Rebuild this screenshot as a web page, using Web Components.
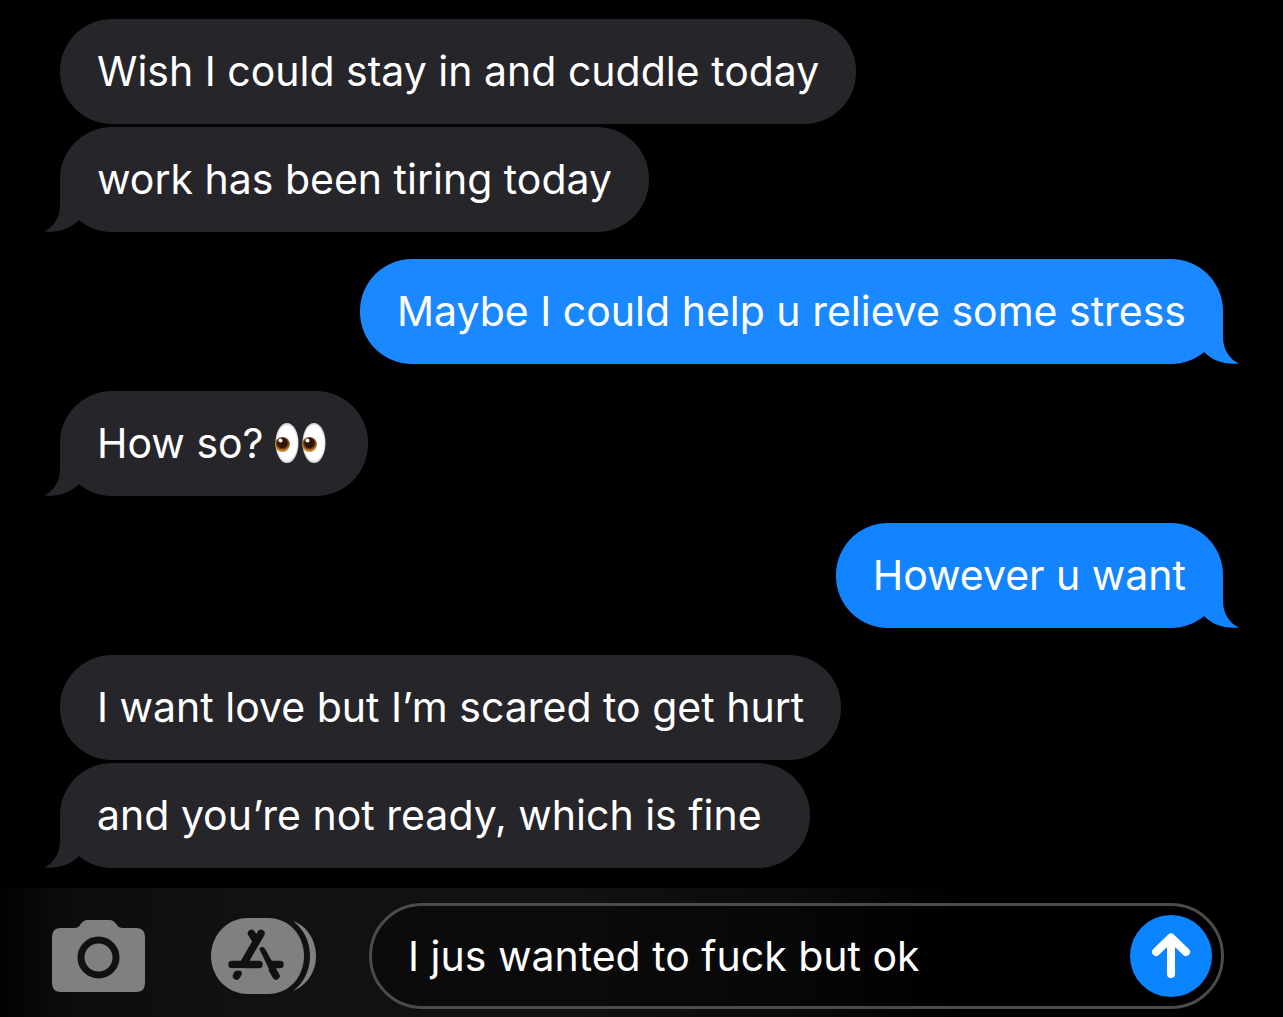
<!DOCTYPE html>
<html lang="en">
<head>
<meta charset="utf-8">
<meta name="viewport" content="width=device-width, initial-scale=1">
<title>Messages</title>
<style>
  body {
    margin: 0;
    background: #000;
    color: #fff;
    font-family: Inter, "Liberation Sans", sans-serif;
    font-size: 41px;
    line-height: 51px;
  }
</style>
</head>
<body>
<chat-screen>
  <chat-group>
    <chat-bubble>Wish I could stay in and cuddle today</chat-bubble>
    <chat-bubble tail>work has been tiring today</chat-bubble>
  </chat-group>
  <chat-group sent>
    <chat-bubble sent tail>Maybe I could help u relieve some stress</chat-bubble>
  </chat-group>
  <chat-group>
    <chat-bubble tail>How so? <eyes-emoji></eyes-emoji></chat-bubble>
  </chat-group>
  <chat-group sent>
    <chat-bubble sent tail style="--sent: #1284ff">However u want</chat-bubble>
  </chat-group>
  <chat-group>
    <chat-bubble>I want love but I’m scared to get hurt</chat-bubble>
    <chat-bubble tail>and you’re not ready, which is fine&nbsp;</chat-bubble>
  </chat-group>
  <chat-composer slot="footer" value="I jus wanted to fuck but ok"></chat-composer>
</chat-screen>

<script>
function makeTemplate(html) {
  const template = document.createElement("template");
  template.innerHTML = html;
  return template;
}

class BaseElement extends HTMLElement {
  constructor() {
    super();
    const shadow = this.attachShadow({ mode: "open" });
    shadow.append(this.constructor.template.content.cloneNode(true));
  }
}

class ChatScreen extends BaseElement {
  static template = makeTemplate(`
    <style>
      :host {
        display: flex;
        flex-direction: column;
        min-height: 100vh;
      }
      main {
        flex: 1;
        display: flex;
        flex-direction: column;
        gap: 27px;
        padding: 19px 60px 20px;
      }
    </style>
    <main><slot></slot></main>
    <slot name="footer"></slot>
  `);
}

class ChatGroup extends BaseElement {
  static template = makeTemplate(`
    <style>
      :host {
        display: flex;
        flex-direction: column;
        align-items: flex-start;
        gap: 3px;
      }
      :host([sent]) {
        align-items: flex-end;
      }
    </style>
    <slot></slot>
  `);
}

class ChatBubble extends BaseElement {
  static template = makeTemplate(`
    <style>
      :host {
        --fill: #26252a;
        display: block;
        position: relative;
        box-sizing: border-box;
        padding: 27px 37px;
        border-radius: 52px;
        background: var(--fill);
      }
      :host([sent]) {
        --fill: var(--sent, #1a88ff);
      }
      svg {
        display: none;
        position: absolute;
        bottom: 0;
        left: -16px;
        fill: var(--fill);
      }
      :host([tail]) svg {
        display: block;
      }
      :host([sent]) svg {
        left: auto;
        right: -16px;
        transform: scaleX(-1);
      }
      p {
        position: relative;
        margin: 0;
      }
    </style>
    <svg width="56" height="52" viewBox="0 0 56 52" aria-hidden="true">
      <path d="M16 0V25C16 37 10 47 0 51.500C14 53 26 49 35 40L56 20V0Z"/>
    </svg>
    <p><slot></slot></p>
  `);
}

class EyesEmoji extends BaseElement {
  static template = makeTemplate(`
    <style>
      :host {
        display: inline-block;
        width: 56px;
        height: 40px;
        vertical-align: -5px;
      }
      svg {
        display: block;
      }
    </style>
    <svg width="56" height="40" viewBox="0 0 56 40" role="img" aria-label="eyes">
      <defs>
        <radialGradient id="white">
          <stop offset=".85" stop-color="#fff"/>
          <stop offset="1" stop-color="#c9c8cc"/>
        </radialGradient>
        <radialGradient id="iris" cy=".4">
          <stop offset=".6" stop-color="#32130a"/>
          <stop offset=".75" stop-color="#6a3a0c"/>
          <stop offset="1" stop-color="#bd8a2c"/>
        </radialGradient>
        <g id="eye">
          <ellipse cx="12" cy="20" rx="11.500" ry="20" fill="url(#white)"/>
          <circle cx="7.500" cy="21.500" r="7.500" fill="url(#iris)"/>
          <circle cx="5.500" cy="17.500" r="2" fill="#fff"/>
        </g>
      </defs>
      <use href="#eye"/>
      <use href="#eye" x="27"/>
    </svg>
  `);
}

class ChatComposer extends BaseElement {
  static template = makeTemplate(`
    <style>
      :host {
        display: flex;
        align-items: center;
        box-sizing: border-box;
        padding: 15px 59px 8px 52px;
        background: linear-gradient(90deg, #020202, #0c0c0d 5%, #111112 18%, #111112 45%, #0b0b0b 62%, #000 75%);
      }
      button {
        flex: none;
        padding: 0;
        border: 0;
        background: none;
        cursor: pointer;
      }
      svg {
        display: block;
      }
      .camera {
        margin-right: 66px;
      }
      .apps {
        margin-right: 52px;
      }
      form {
        flex: 1;
        min-width: 0;
        display: flex;
        align-items: center;
        box-sizing: border-box;
        padding: 9px 9px 9px 36px;
        border: 3px solid #4b4b4e;
        border-radius: 53px;
        background: rgba(0, 0, 0, .35);
      }
      input {
        flex: 1;
        min-width: 0;
        padding: 0;
        border: 0;
        outline: 0;
        background: none;
        color: inherit;
        font: inherit;
      }
      .send {
        border-radius: 50%;
        background: #0b84ff;
      }
    </style>
    <button class="camera" type="button" aria-label="Camera">
      <svg width="93" height="72" viewBox="0 0 93 72">
        <path fill="#808081" d="M9 8H22C25 8 27 7 28 5C30 2 32 0 36 0H57C61 0 63 2 65 5C66 7 68 8 71 8H84Q93 8 93 17V63Q93 72 84 72H9Q0 72 0 63V17Q0 8 9 8Z"/>
        <circle cx="46.500" cy="37.500" r="17.500" fill="none" stroke="#111112" stroke-width="7"/>
      </svg>
    </button>
    <button class="apps" type="button" aria-label="Apps">
      <svg width="106" height="76" viewBox="0 0 106 76">
        <g fill="#808081">
          <path d="M37 0H57C78 0 93 17 93 38S78 76 57 76H37C16 76 0 59 0 38S16 0 37 0Z"/>
          <path d="M82 3C96 8 105 22 105 38S96 67 82 73C93 65 99 52 99 38S93 11 82 3Z"/>
        </g>
        <g fill="none" stroke="#111112" stroke-width="7.500" stroke-linecap="round">
          <path d="M50 15.500L33.500 44M40.500 15.500L44 21M21 46.500H48M25.500 58L27 55.500M51 33L65 58M61 46.500H69"/>
          <path stroke="#808081" stroke-width="2.500" stroke-linecap="butt" d="M19 51.500H34M47 31L57 52"/>
        </g>
      </svg>
    </button>
    <form>
      <input type="text" aria-label="Message">
      <button class="send" type="submit" aria-label="Send">
        <svg width="82" height="82" viewBox="0 0 82 82" fill="none" stroke="#fff" stroke-width="8" stroke-linecap="round" stroke-linejoin="round">
          <path d="M26 37L41 22.500L56 37M41 24V59"/>
        </svg>
      </button>
    </form>
  `);

  connectedCallback() {
    this.shadowRoot.querySelector("input").value = this.getAttribute("value") || "";
    this.shadowRoot.querySelector("form").addEventListener("submit", (e) => e.preventDefault());
  }
}

customElements.define("chat-screen", ChatScreen);
customElements.define("chat-group", ChatGroup);
customElements.define("chat-bubble", ChatBubble);
customElements.define("eyes-emoji", EyesEmoji);
customElements.define("chat-composer", ChatComposer);
</script>
</body>
</html>
